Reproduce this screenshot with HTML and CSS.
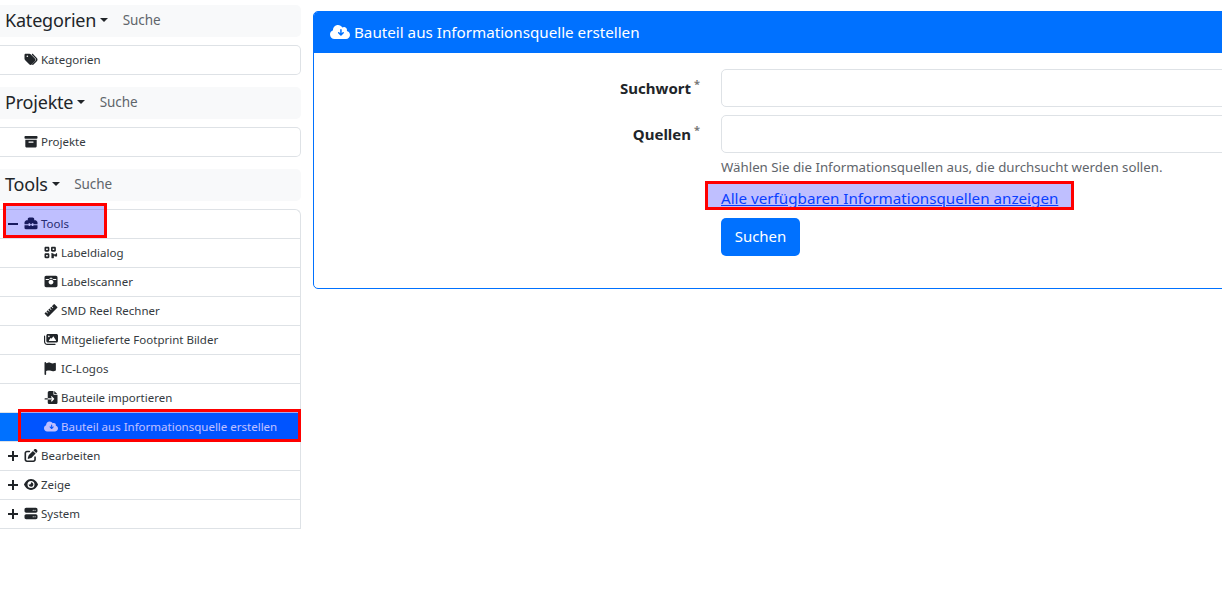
FILE: index.html
```html
<!DOCTYPE html>
<html lang="de">
<head>
  <meta charset="UTF-8">
  <meta name="viewport" content="width=device-width, initial-scale=1.0">
  <title>Bauteil aus Informationsquelle erstellen</title>
  <link rel="stylesheet" href="styles.css">
</head>
<body>
  <div class="page">
    <aside class="sidebar">
      <div class="tree-head"><span class="tree-title">Kategorien<i class="caret"></i></span><span class="tree-search">Suche</span></div>
      <ul class="tree tree-single">
        <li class="tree-row">
          <svg class="ico" viewBox="0 0 512 512"><path d="M0 80v150c0 17 7 33 19 45l176 176c25 25 65 25 90 0l133-133c25-25 25-65 0-90L242 52c-12-12-28-19-45-19H48C21 33 0 54 0 80zm112 16a32 32 0 1 1 0 64 32 32 0 1 1 0-64z"/><path d="M335 41l150 152c37 37 37 97 0 134L345 467c-12 12-30 12-40 0-9-10-9-25 1-35l140-140c17-17 17-45 0-62L295 78c-10-10-9-25 0-35 10-10 30-12 40-2z"/></svg>
          <span>Kategorien</span>
        </li>
      </ul>
      <div class="tree-head"><span class="tree-title">Projekte<i class="caret"></i></span><span class="tree-search">Suche</span></div>
      <ul class="tree tree-single">
        <li class="tree-row">
          <svg class="ico" viewBox="0 0 512 512"><path d="M32 40h448c18 0 32 14 32 32v48c0 18-14 32-32 32H32c-18 0-32-14-32-32V72c0-18 14-32 32-32zm0 144h448v256c0 35-29 48-64 48H96c-35 0-64-13-64-48V184zm144 72c-13 0-24 11-24 24s11 24 24 24h160c13 0 24-11 24-24s-11-24-24-24H176z"/></svg>
          <span>Projekte</span>
        </li>
      </ul>
      <div class="tree-head"><span class="tree-title">Tools<i class="caret"></i></span><span class="tree-search">Suche</span></div>
      <ul class="tree tree-full">
        <li class="tree-row">
          <span class="toggle toggle-open"></span>
          <svg class="ico" viewBox="0 0 512 512"><path d="M176 88c0-9 7-16 16-16h128c9 0 16 7 16 16v40h-48V120h-64v8h-48V88zm-48 40V88c0-35 29-64 64-64h128c35 0 64 29 64 64v40h40c13 0 25 5 34 14l40 40c9 9 14 21 14 34v70H352v-24c0-9-7-16-16-16h-32c-9 0-16 7-16 16v24h-64v-24c0-9-7-16-16-16h-32c-9 0-16 7-16 16v24H0v-70c0-13 5-25 14-34l40-40c9-9 21-14 34-14h40zM0 320h160v16c0 9 7 16 16 16h32c9 0 16-7 16-16v-16h64v16c0 9 7 16 16 16h32c9 0 16-7 16-16v-16h160v112c0 26-22 48-48 48H48c-26 0-48-22-48-48V320z"/></svg>
          <span>Tools</span>
        </li>
        <li class="tree-row tree-sub">
          <svg class="ico" viewBox="0 0 512 512"><path d="M0 80c0-26 22-48 48-48h96c26 0 48 22 48 48v96c0 26-22 48-48 48H48c-26 0-48-22-48-48V80zm64 16v64h64V96H64zM0 336c0-26 22-48 48-48h96c26 0 48 22 48 48v96c0 26-22 48-48 48H48c-26 0-48-22-48-48v-96zm64 16v64h64v-64H64zM304 32h96c26 0 48 22 48 48v96c0 26-22 48-48 48h-96c-26 0-48-22-48-48V80c0-26 22-48 48-48zm80 64h-64v64h64V96zM256 304c0-9 7-16 16-16h64c9 0 16 7 16 16s7 16 16 16h64c9 0 16-7 16-16s7-16 16-16h16c9 0 16 7 16 16v96c0 9-7 16-16 16h-64c-9 0-16-7-16-16s-7-16-16-16-16 7-16 16v64c0 9-7 16-16 16h-64c-9 0-16-7-16-16V304z"/></svg>
          <span>Labeldialog</span>
        </li>
        <li class="tree-row tree-sub">
          <svg class="ico" viewBox="0 0 512 512"><path d="M64 32h384c35 0 64 29 64 64v320c0 35-29 64-64 64H64c-35 0-64-29-64-64V96c0-35 29-64 64-64zm-16 128v32h112c22-24 55-40 96-40s74 16 96 40h112v-32H320l-24-56h-80l-24 56H48zm208 24c-53 0-96 43-96 96s43 96 96 96 96-43 96-96-43-96-96-96z"/></svg>
          <span>Labelscanner</span>
        </li>
        <li class="tree-row tree-sub">
          <svg class="ico" viewBox="0 0 512 512"><path transform="rotate(-45 256 256)" d="M-10 160h80v80h30v-80h70v80h30v-80h70v80h30v-80h70v80h30v-80h110a20 20 0 0 1 20 20v152a20 20 0 0 1-20 20H10a20 20 0 0 1-20-20z"/></svg>
          <span>SMD Reel Rechner</span>
        </li>
        <li class="tree-row tree-sub">
          <svg class="ico" viewBox="0 0 576 512"><path d="M160 32c-35 0-64 29-64 64v224c0 35 29 64 64 64h352c35 0 64-29 64-64V96c0-35-29-64-64-64H160zm236 106l96 144c4 7 5 15 1 22s-11 11-19 11H224c-8 0-15-4-19-11s-3-15 1-22l56-80c4-6 11-10 18-10s14 4 18 10l14 20 56-84c4-7 11-10 18-10s14 3 18 10zM200 96a32 32 0 1 1 0 64 32 32 0 1 1 0-64zM48 120c0-13-11-24-24-24S0 107 0 120v224c0 75 61 136 136 136h320c13 0 24-11 24-24s-11-24-24-24H136c-49 0-88-39-88-88V120z"/></svg>
          <span>Mitgelieferte Footprint Bilder</span>
        </li>
        <li class="tree-row tree-sub">
          <svg class="ico" viewBox="0 0 512 512"><path d="M64 32C64 14 50 0 32 0S0 14 0 32v448c0 18 14 32 32 32s32-14 32-32V352l64-16c41-10 85-6 123 13 44 22 96 25 142 7l35-13c12-5 20-17 20-30V64c0-23-24-38-45-28l-10 5c-46 23-101 23-147 0-35-17-75-22-113-12L64 48V32z"/></svg>
          <span>IC-Logos</span>
        </li>
        <li class="tree-row tree-sub">
          <svg class="ico" viewBox="0 0 512 512"><path d="M128 64c0-35 29-64 64-64h160v128c0 18 14 32 32 32h128v288c0 35-29 64-64 64H192c-35 0-64-29-64-64V336h174l-39 39c-9 9-9 25 0 34s25 9 34 0l80-80c9-9 9-25 0-34l-80-80c-9-9-25-9-34 0s-9 25 0 34l39 39H128V64zm0 224v48H24c-13 0-24-11-24-24s11-24 24-24h104zM512 128H384V0l128 128z"/></svg>
          <span>Bauteile importieren</span>
        </li>
        <li class="tree-row tree-sub tree-active">
          <svg class="ico" viewBox="0 0 640 512"><path d="M144 480C65 480 0 415 0 336c0-62 40-115 96-134v-10c0-88 72-160 160-160 59 0 111 32 139 80 15-10 33-16 53-16 53 0 96 43 96 96 0 12-2 24-6 35 58 12 102 63 102 125 0 71-57 128-128 128H144zm223-113l72-72c9-9 9-25 0-34s-25-9-34 0l-31 31V184c0-13-11-24-24-24s-24 11-24 24v108l-31-31c-9-9-25-9-34 0s-9 25 0 34l72 72c9 9 25 9 34 0z"/></svg>
          <span>Bauteil aus Informationsquelle erstellen</span>
        </li>
        <li class="tree-row">
          <span class="toggle toggle-closed"></span>
          <svg class="ico" viewBox="0 0 512 512"><path d="M472 22l18 18c25 25 25 65 0 90l-30 30-108-108 30-30c25-25 65-25 90 0zM172 232L330 74l108 108-158 158c-7 7-15 12-24 15l-98 33c-8 3-17 1-24-6s-8-16-6-24l33-98c3-9 8-17 15-24zM96 64h96c18 0 32 14 32 32s-14 32-32 32H96c-18 0-32 14-32 32v256c0 18 14 32 32 32h256c18 0 32-14 32-32v-96c0-18 14-32 32-32s32 14 32 32v96c0 53-43 96-96 96H96c-53 0-96-43-96-96V160c0-53 43-96 96-96z"/></svg>
          <span>Bearbeiten</span>
        </li>
        <li class="tree-row">
          <span class="toggle toggle-closed"></span>
          <svg class="ico" viewBox="0 0 576 512"><path d="M288 32c-81 0-145 37-192 80C49 156 18 208 3 244c-4 8-4 16 0 24 15 36 46 88 93 132 47 44 111 80 192 80s145-37 192-80c47-44 78-96 93-132 4-8 4-16 0-24-15-36-46-88-93-132-47-43-111-80-192-80zM144 256a144 144 0 1 1 288 0 144 144 0 1 1-288 0zm144-64c0 35-29 64-64 64-7 0-14-1-20-3-6-2-12 1-12 7 0 7 1 14 3 21 14 51 67 82 118 68s82-67 68-118c-11-42-48-70-89-71-6 0-9 6-7 12 2 7 3 13 3 20z"/></svg>
          <span>Zeige</span>
        </li>
        <li class="tree-row">
          <span class="toggle toggle-closed"></span>
          <svg class="ico" viewBox="0 0 512 512"><path d="M64 32C29 32 0 61 0 96v64c0 35 29 64 64 64h384c35 0 64-29 64-64V96c0-35-29-64-64-64H64zm280 72a24 24 0 1 1 0 48 24 24 0 1 1 0-48zm48 24a24 24 0 1 1 48 0 24 24 0 1 1-48 0zM64 288c-35 0-64 29-64 64v64c0 35 29 64 64 64h384c35 0 64-29 64-64v-64c0-35-29-64-64-64H64zm280 72a24 24 0 1 1 0 48 24 24 0 1 1 0-48zm48 24a24 24 0 1 1 48 0 24 24 0 1 1-48 0z"/></svg>
          <span>System</span>
        </li>
      </ul>
    </aside>

    <main class="content">
      <section class="card">
        <header class="card-head">
          <svg class="ico-head" viewBox="0 0 640 512"><path d="M144 480C65 480 0 415 0 336c0-62 40-115 96-134v-10c0-88 72-160 160-160 59 0 111 32 139 80 15-10 33-16 53-16 53 0 96 43 96 96 0 12-2 24-6 35 58 12 102 63 102 125 0 71-57 128-128 128H144zm223-113l72-72c9-9 9-25 0-34s-25-9-34 0l-31 31V184c0-13-11-24-24-24s-24 11-24 24v108l-31-31c-9-9-25-9-34 0s-9 25 0 34l72 72c9 9 25 9 34 0z"/></svg>
          <span>Bauteil aus Informationsquelle erstellen</span>
        </header>
        <form class="card-body">
          <div class="form-row">
            <label class="form-label">Suchwort<sup class="req">*</sup></label>
            <input class="form-input" type="text">
          </div>
          <div class="form-row">
            <label class="form-label">Quellen<sup class="req">*</sup></label>
            <input class="form-input" type="text">
          </div>
          <div class="form-extra">
            <p class="form-help">Wählen Sie die Informationsquellen aus, die durchsucht werden sollen.</p>
            <a class="form-link" href="#">Alle verfügbaren Informationsquellen anzeigen</a>
            <button class="btn" type="button">Suchen</button>
          </div>
        </form>
      </section>
    </main>
  </div>

  <div class="mark mark-tools"></div>
  <div class="mark mark-active"></div>
  <div class="mark mark-link"></div>
</body>
</html>
```

FILE: styles.css
```css
html, body {
  height: 100%;
  margin: 0;
  padding: 0;
}

* {
  box-sizing: border-box;
}

body {
  font-family: "Noto Sans", sans-serif;
  font-size: 16px;
  color: #212529;
  background: #fff;
  overflow: hidden;
  position: relative;
}

.page {
  display: flex;
  align-items: flex-start;
}

/* sidebar */
.sidebar {
  width: 301px;
  flex: none;
  padding-top: 5px;
}

.tree-head {
  height: 32px;
  display: flex;
  align-items: center;
  padding: 0 0 2px 5px;
  background: #f8f9fa;
  border-radius: 0 5px 5px 0;
}

.tree-title {
  font-size: 18px;
  letter-spacing: -0.2px;
  color: #212529;
  display: flex;
  align-items: center;
}

.caret {
  width: 0;
  height: 0;
  margin-left: 4px;
  border-top: 4.5px solid #212529;
  border-left: 4.5px solid transparent;
  border-right: 4.5px solid transparent;
}

.tree-search {
  font-size: 13.5px;
  letter-spacing: -0.1px;
  color: #5f656b;
  margin-left: 14.5px;
}

.tree {
  list-style: none;
  margin: 8px 0 12px;
  padding: 0;
  background: #fff;
  border: 1px solid #dee2e6;
  border-left: 0;
  border-radius: 0 5px 5px 0;
}

.tree-single {
  height: 30px;
}

.tree-full {
  margin-bottom: 0;
  border-bottom: 0;
  border-radius: 0 6px 0 0;
}

.tree-row {
  height: 29px;
  display: flex;
  align-items: center;
  padding: 0 0 2px 24px;
  font-size: 11.5px;
  color: #343a40;
  border-bottom: 1px solid #dee2e6;
  position: relative;
}

.tree-single .tree-row {
  height: 28px;
  border-bottom: 0;
}

.tree-sub {
  padding-left: 44px;
}

.tree-active {
  background: #0071ff;
  color: #fff;
}

.tree-active .ico {
  fill: #fff;
}

.ico {
  width: 14px;
  height: 13px;
  margin-right: 3px;
  flex: none;
  fill: #212529;
}

.toggle {
  position: absolute;
  left: 8px;
  top: 13px;
  width: 10px;
  height: 2px;
  background: #212529;
}

.toggle-closed::after {
  content: "";
  position: absolute;
  left: 4px;
  top: -4px;
  width: 2px;
  height: 10px;
  background: #212529;
}

/* main card */
.content {
  flex: none;
  width: 1000px;
  margin-left: 12px;
  padding-top: 11px;
}

.card {
  border: 1px solid #0071ff;
  border-radius: 5px;
  height: 278px;
}

.card-head {
  height: 41px;
  background: #0071ff;
  color: #fff;
  display: flex;
  align-items: center;
  padding: 0 0 2px 16px;
  font-size: 15.2px;
  border-radius: 4px 4px 0 0;
}

.ico-head {
  width: 20px;
  height: 16px;
  margin-right: 4px;
  fill: #fff;
}

.card-body {
  padding-top: 16px;
}

.form-row {
  display: flex;
  align-items: center;
  margin-bottom: 8px;
}

.form-row + .form-row {
  margin-bottom: 4px;
}

.form-label {
  width: 386px;
  flex: none;
  text-align: right;
  font-weight: 700;
  font-size: 15px;
}

.req {
  color: #777;
  font-size: 11px;
  font-weight: 700;
  margin-left: 3px;
  line-height: 0;
}

.form-input {
  margin-left: 21px;
  width: 600px;
  height: 38px;
  border: 1px solid #dee2e6;
  border-radius: 5px;
  background: #fff;
}

.form-extra {
  margin-left: 407px;
}

.form-help {
  margin: 0;
  font-size: 13.27px;
  line-height: 20px;
  color: #5f656b;
}

.form-link {
  display: block;
  margin-top: 10px;
  font-size: 15.2px;
  line-height: 22px;
  color: #0d55ff;
}

.btn {
  display: block;
  margin-top: 9px;
  width: 79px;
  height: 38px;
  padding: 0 0 2px;
  border: 0;
  border-radius: 5px;
  background: #0071ff;
  color: #fff;
  font-family: inherit;
  font-size: 15px;
}

/* red annotation boxes */
.mark {
  position: absolute;
  border: 3px solid #f00;
  background: rgba(0, 0, 255, 0.25);
}

.mark-tools {
  left: 3px;
  top: 203px;
  width: 104px;
  height: 35px;
}

.mark-active {
  left: 18px;
  top: 409px;
  width: 283px;
  height: 33px;
}

.mark-link {
  left: 705px;
  top: 181px;
  width: 369px;
  height: 29px;
}
```
